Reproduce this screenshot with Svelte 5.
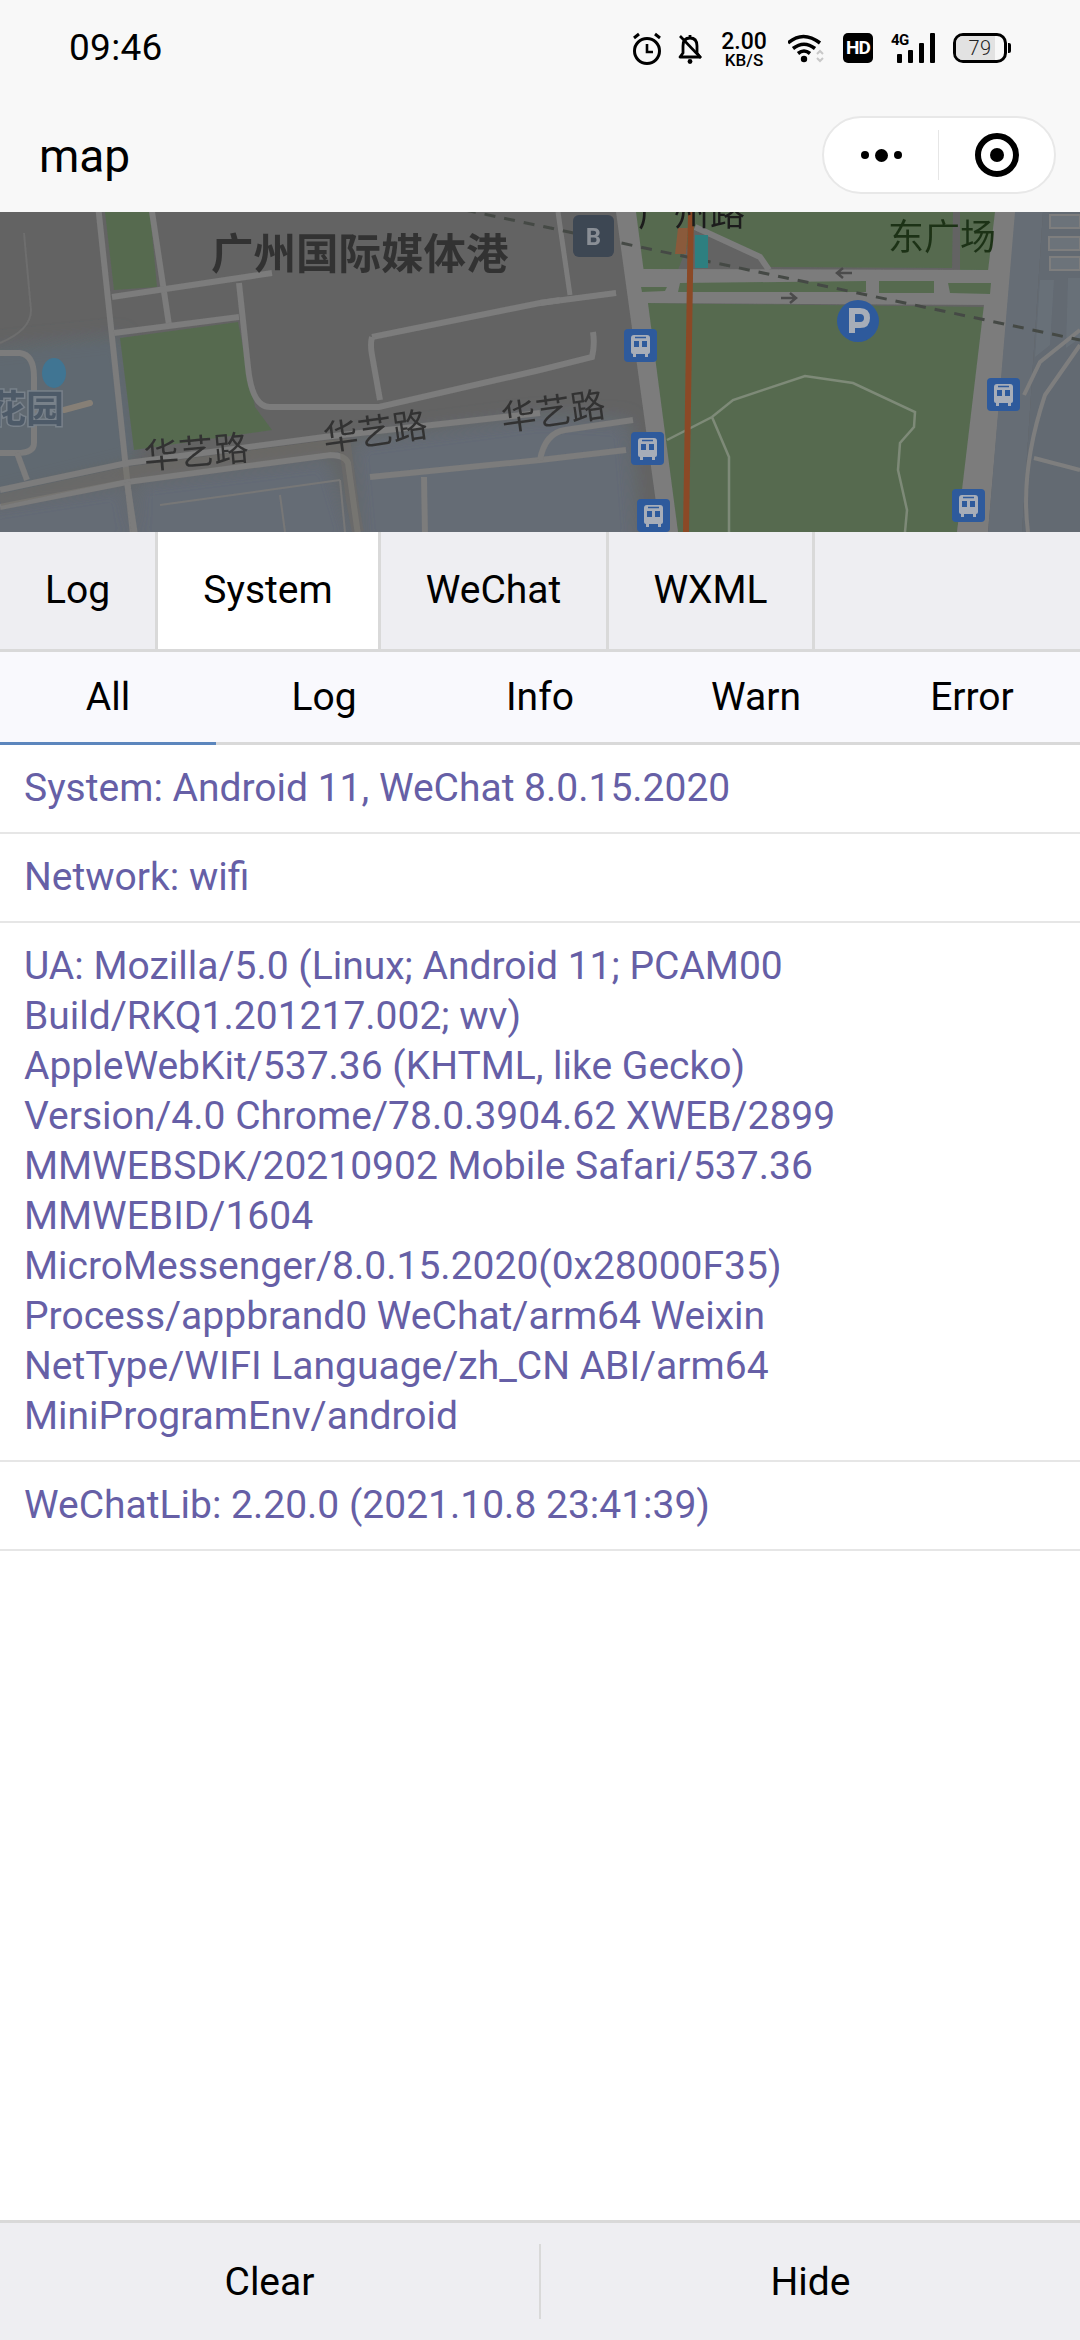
<script>
  const topTabs = ['Log', 'System', 'WeChat', 'WXML'];
  const subTabs = ['All', 'Log', 'Info', 'Warn', 'Error'];
  const ua = [
    'UA: Mozilla/5.0 (Linux; Android 11; PCAM00',
    'Build/RKQ1.201217.002; wv)',
    'AppleWebKit/537.36 (KHTML, like Gecko)',
    'Version/4.0 Chrome/78.0.3904.62 XWEB/2899',
    'MMWEBSDK/20210902 Mobile Safari/537.36',
    'MMWEBID/1604',
    'MicroMessenger/8.0.15.2020(0x28000F35)',
    'Process/appbrand0 WeChat/arm64 Weixin',
    'NetType/WIFI Language/zh_CN ABI/arm64',
    'MiniProgramEnv/android'
  ];
  const buses = [[624, 329], [631, 432], [637, 499], [987, 378], [952, 489]];
  const roads = [
    'M98 205L133 535', 'M151 205L169 325', 'M112 297L272 273', 'M114 333L239 317',
    'M239 283L248 367Q252 407 270 407L379 407L540 370L592 357Q595 345 593 332',
    'M372 337L540 303L616 293', 'M372 337Q370 345 372 355L380 400',
    'M370 477L540 460L626 450', 'M424 477L425 535', 'M540 460Q545 433 565 430L633 420',
    'M0 353L20 353Q34 355 34 377L34 443Q34 453 17 453L0 453',
    'M17 453L27 480', 'M0 490L127 463L324 437L540 413', 'M0 507L127 482L330 455Q345 455 348 463L358 535',
    'M127 482L135 535', 'M540 303L560 300'
  ];
</script>

<div class="phone">
  <header class="status">
    <span class="time">09:46</span>
    <div class="icons">
      <svg class="i-alarm" viewBox="0 0 30 34" width="30" height="34">
        <circle cx="15" cy="19" r="12.5" fill="none" stroke="#000" stroke-width="3" />
        <path d="M15 12v8h6" fill="none" stroke="#000" stroke-width="2.6" />
        <path d="M2 6l5-4M28 6l-5-4" fill="none" stroke="#000" stroke-width="3" />
      </svg>
      <svg class="i-bell" viewBox="0 0 26 32" width="26" height="32">
        <path d="M13 3v2M6 14q0-8 7-8t7 8v7l3 4H3l3-4z" fill="none" stroke="#000" stroke-width="2.8" stroke-linejoin="round" />
        <path d="M3 4l21 22" stroke="#000" stroke-width="2.6" />
        <circle cx="13" cy="29.5" r="2.4" />
      </svg>
      <div class="speed"><b>2.00</b><span>KB/S</span></div>
      <svg class="i-wifi" viewBox="0 0 36 30" width="36" height="30">
        <path d="M0 10q15-13 32 0M5 15.500q11-8.500 22 0M10 20.500q6-5 12 0" fill="none" stroke="#000" stroke-width="3.600" />
        <circle cx="16" cy="26" r="3.200" />
        <path d="M29 21l3-3 3 3M29 25l3 3 3-3" fill="none" stroke="#c8c8c8" stroke-width="2" />
      </svg>
      <div class="hd">HD</div>
      <div class="signal">
        <span class="g">4G</span>
        <i class="b1"></i><i class="b2"></i><i class="b3"></i><i class="b4"></i>
      </div>
      <div class="battery"><div class="cell"><span class="fill"></span><span class="num">79</span></div><i></i></div>
    </div>
  </header>

  <nav class="title">
    <span>map</span>
    <div class="capsule">
      <div class="dots"><i></i><i class="big"></i><i></i></div>
      <span class="sep"></span>
      <div class="rec"><i></i></div>
    </div>
  </nav>

  <svg class="map" viewBox="0 212 1080 320" width="1080" height="320">
    <defs>
      <filter id="soft" x="-10%" y="-10%" width="120%" height="120%"><feGaussianBlur stdDeviation="9" /></filter>
      <filter id="jpeg" x="0" y="0" width="100%" height="100%"><feGaussianBlur stdDeviation="0.6" /></filter>
    </defs>
    <g filter="url(#jpeg)">
    <rect x="0" y="212" width="1080" height="320" fill="#636363" />
    <g filter="url(#soft)">
      <path d="M-20 350L124 335L140 460L-20 500Z" fill="#616971" />
      <path d="M-20 505L127 482L135 550L-20 550ZM135 480L330 455L358 550L135 550ZM350 440L540 415L630 420L640 550L360 550Z" fill="#656c74" />
    </g>
    <path d="M105 212L150 212L157 287L114 290Z" fill="#566b50" />
    <path d="M120 338L238 322L255 407L272 430L134 450Z" fill="#566b50" />
    <path d="M634 212L953 212L952 268L769 267L760 257L695 227L678 270L640 272Z" fill="#566b50" />
    <path d="M960 212L995 212L992 270L960 270Z" fill="#566b50" />
    <path d="M645 303L988 307L957 532L678 532Z" fill="#566b50" />

    <path d="M995 212L1016 212L988 532L957 532Z" fill="#7c7c7c" />
    <path d="M1015 212L1043 212L1022 532L988 532Z" fill="#666d75" />
    <path d="M1043 212L1080 212L1080 532L1022 532Z" fill="#636a72" />
    <path d="M1050 215h30v13h-30zM1049 237h31v13h-31zM1050 257h30v13h-30z" fill="#6c737a" stroke="#7e7e7e" stroke-width="2" />
    <path d="M1040 280h14l-4 65-15 12zM1068 278h12v60l-14 10z" fill="#687078" />
    <path d="M1024 395L1040 362L1080 330M1028 532Q1020 470 1045 395L1080 345M1034 458L1080 470" fill="none" stroke="#7e7e7e" stroke-width="4" />

    <path d="M616 212L636 212L678 532L660 532Z" fill="#7c7c7c" />
    <path d="M558 212L570 295M616 293L540 303" fill="none" stroke="#7c7c7c" stroke-width="5" />
    <path d="M634 269L992 270L992 305L645 303Z" fill="#7c7c7c" />
    <path d="M641 287L667 287L665 291L642 292ZM680 283L866 281L866 292L678 292ZM879 281L934 281L934 293L879 293ZM948 283L991 283L990 294L950 293Z" fill="#566b50" />
    <path d="M695 227L760 257L769 270" fill="none" stroke="#7c7c7c" stroke-width="6" />

    <g fill="none" stroke="#7b7b7b" stroke-width="6">
      {#each roads as d}<path {d} />{/each}
    </g>
    <path d="M0 500L127 473L330 446L345 445L352 500L358 532" fill="none" stroke="#716d66" stroke-width="12" opacity=".45" />
    <path d="M24 233L31 310Q31 330 0 343" fill="none" stroke="#6e6e6e" stroke-width="2" />
    <path d="M160 505L340 480M280 495L285 532M340 480L345 532" fill="none" stroke="#777" stroke-width="2" />
    <path d="M64 410L90 403" stroke="#867f76" stroke-width="6" stroke-linecap="round" />

    <g fill="none" stroke="#7e8a78" stroke-width="2.500">
      <path d="M667 440L712 417L733 400L805 376L853 383L915 412L914 427L900 443L898 470L907 510L905 532" />
      <path d="M712 417L729 457L729 532" />
    </g>

    <path d="M465 210L1080 340" fill="none" stroke="#454a45" stroke-width="3" stroke-dasharray="11 9" />

    <path d="M678 228L688 228L686 254L675 254Z" fill="#8a5a3a" />
    <rect x="695" y="235" width="13" height="33" fill="#2f7f80" />
    <path d="M691 212L686 532" stroke="#8b4a27" stroke-width="6" />

    <path d="M852 273H838M843 268L837 273L843 278M781 298H795M790 293L796 298L790 303" fill="none" stroke="#4c4c4c" stroke-width="2.500" />

    <ellipse cx="54" cy="373" rx="12" ry="15" fill="#3f7593" />

    <text class="zh" x="211" y="269" font-size="42.500" font-weight="700" fill="#333">广州国际媒体港</text>
    <text class="zh" x="-12" y="422" font-size="38" font-weight="700" fill="#4e5a68" stroke="#78818a" stroke-width="3" paint-order="stroke">花园</text>
    <text class="zh" x="638" y="226" font-size="35" fill="#1d1d1d" letter-spacing="1">广州路</text>
    <text class="zh" x="888" y="250" font-size="36" fill="#1f3318">东广场</text>
    <text class="zh" transform="translate(145 469) rotate(-5)" font-size="35" fill="#333">华艺路</text>
    <text class="zh" transform="translate(325 451) rotate(-8)" font-size="35" fill="#333">华艺路</text>
    <text class="zh" transform="translate(503 431) rotate(-8)" font-size="35" fill="#333">华艺路</text>

    <rect x="573" y="215" width="41" height="42" rx="6" fill="#3c4653" />
    <text class="lat" x="593.500" y="245" font-size="24" font-weight="700" text-anchor="middle" fill="#8a8f96">B</text>

    <circle cx="858" cy="321" r="21" fill="#2d5a9c" />
    <path d="M852 333V311H860Q867 311 867 318T860 325H852" fill="none" stroke="#a7adb8" stroke-width="6" />

    {#each buses as [x, y]}
      <g transform="translate({x} {y})">
        <rect width="33" height="33" rx="4" fill="#2d5a9c" />
        <path d="M7 9Q7 6 10 6H23Q26 6 26 9V23Q26 25 24 25H9Q7 25 7 23Z" fill="#a7adb8" />
        <path d="M9 28h3v-3H9zM21 28h3v-3h-3z" fill="#a7adb8" />
        <path d="M10 12h5v6h-5zM18 12h5v6h-5z" fill="#2d5a9c" />
        <path d="M11 8.500h11" stroke="#2d5a9c" stroke-width="1.500" />
      </g>
    {/each}
    </g>
  </svg>

  <div class="tabs">
    {#each topTabs as t, i}
      <div class="tab t{i}" class:on={t === 'System'}>{t}</div>
    {/each}
  </div>

  <div class="subs">
    {#each subTabs as t, i}
      <div class="sub" class:on={i === 0}>{t}</div>
    {/each}
  </div>

  <main class="list">
    <div class="row">System: Android 11, WeChat 8.0.15.2020</div>
    <div class="row">Network: wifi</div>
    <div class="row">{#each ua as l}<div>{l}</div>{/each}</div>
    <div class="row">WeChatLib: 2.20.0 (2021.10.8 23:41:39)</div>
  </main>

  <footer class="foot">
    <div class="btn">Clear</div>
    <div class="btn">Hide</div>
  </footer>
</div>

<style>
  :global(body) { margin: 0; background: #fff; }
  .phone {
    width: 1080px; height: 2340px; display: flex; flex-direction: column;
    font-family: Roboto, "Noto Sans", sans-serif; color: #000; background: #fff; overflow: hidden;
  }
  .status {
    height: 96px; flex: none; background: #f8f8f8; display: flex; justify-content: space-between;
    align-items: flex-start; padding: 0 69px 0 69px; box-sizing: border-box;
  }
  .time { font-size: 37px; line-height: 42px; margin-top: 27px; letter-spacing: .3px; }
  .icons { display: flex; align-items: flex-start; margin-top: 31px; }
  .icons svg { display: block; flex: none; }
  .i-alarm { margin-top: 1px; }
  .i-bell { margin-left: 15px; margin-top: 1px; }
  .speed { margin-left: 16px; width: 50px; display: flex; flex-direction: column; align-items: center; }
  .speed b { font-size: 23px; line-height: 21px; font-weight: 500; }
  .speed span { font-size: 17px; line-height: 17px; font-weight: 500; }
  .i-wifi { margin-left: 19px; margin-top: 2px; }
  .hd {
    margin-left: 19px; margin-top: 2px; width: 30px; height: 30px; background: #000; color: #fff; border-radius: 5px;
    font-size: 19px; line-height: 30px; font-weight: 700; text-align: center; letter-spacing: -1px;
  }
  .signal { margin-left: 18px; margin-top: 2px; width: 44px; height: 30px; position: relative; }
  .signal .g { position: absolute; left: 0; top: -2px; font-size: 15px; line-height: 18px; font-weight: 700; letter-spacing: -.5px; }
  .signal i { position: absolute; bottom: 0; width: 5px; background: #000; border-radius: 1px; }
  .b1 { left: 6px; height: 9px; }
  .b2 { left: 17px; height: 13px; }
  .b3 { left: 28px; height: 20px; }
  .b4 { left: 39px; height: 30px; }
  .battery { margin-left: 18px; margin-top: 2px; display: flex; align-items: center; }
  .cell {
    width: 48px; height: 24px; border: 3px solid #000; border-radius: 10px; position: relative; overflow: hidden;
    display: flex; align-items: center; justify-content: center;
  }
  .fill { position: absolute; left: 0; top: 0; bottom: 0; width: 39px; background: #e2e2e2; }
  .num { position: relative; font-size: 20px; font-weight: 300; color: #222; letter-spacing: .5px; }
  .battery i { width: 3px; height: 10px; background: #000; margin-left: 1px; border-radius: 0 2px 2px 0; }

  .title {
    height: 116px; flex: none; background: #f8f8f8; display: flex; align-items: flex-start; justify-content: space-between;
    padding: 0 24px 0 39px; box-sizing: border-box;
  }
  .title > span { font-size: 46px; line-height: 54px; margin-top: 33px; }
  .capsule {
    margin-top: 20px; width: 234px; height: 78px; box-sizing: border-box; background: #fff; border: 2px solid #e8e8e8;
    border-radius: 39px; display: flex; align-items: center;
  }
  .dots { width: 114px; display: flex; align-items: center; justify-content: center; gap: 6px; }
  .dots i { width: 8px; height: 8px; border-radius: 50%; background: #000; }
  .dots i.big { width: 13px; height: 13px; }
  .sep { width: 1px; height: 50px; background: #e6e6e6; }
  .rec { flex: 1; display: flex; align-items: center; justify-content: center; }
  .rec i { width: 44px; height: 44px; box-sizing: border-box; border: 6px solid #000; border-radius: 50%; position: relative; display: flex; align-items: center; justify-content: center; }
  .rec i::after { content: ""; width: 14px; height: 14px; background: #000; border-radius: 50%; }

  .map { display: block; flex: none; }
  .zh { font-family: "Noto Sans CJK SC", sans-serif; }
  .lat { font-family: Roboto, sans-serif; }

  .tabs {
    height: 120px; flex: none; box-sizing: border-box; background: #eeeef2; border-bottom: 3px solid #d9d9d9; display: flex;
  }
  .tab {
    box-sizing: border-box; border-right: 3px solid #d9d9d9; font-size: 39px; display: flex; align-items: center; justify-content: center; padding-bottom: 2px;
  }
  .t0 { width: 158px; }
  .t1 { width: 223px; }
  .t2 { width: 228px; }
  .t3 { width: 206px; }
  .tab.on { background: #fff; }

  .subs {
    height: 93px; flex: none; box-sizing: border-box; background: #f9f9fd; border-bottom: 3px solid #d9d9d9; display: flex;
  }
  .sub {
    flex: 1; font-size: 39px; display: flex; align-items: center; justify-content: center; position: relative; height: 93px; box-sizing: border-box; padding-bottom: 3px;
  }
  .sub.on::after { content: ""; position: absolute; left: 0; right: 0; bottom: 0; height: 3px; background: #5c86bd; }

  .list { flex: 1; }
  .row {
    padding: 18px 24px 19px; font-size: 39px; line-height: 50px; color: #665fa6; border-bottom: 2px solid #e6e6e6;
  }

  .foot { height: 120px; flex: none; box-sizing: border-box; background: #eeeef2; border-top: 3px solid #d9d9d9; display: flex; align-items: center; }
  .btn { flex: 1; height: 75px; font-size: 39px; display: flex; align-items: center; justify-content: center; }
  .btn:first-child { border-right: 2px solid #d9d9d9; }
</style>
